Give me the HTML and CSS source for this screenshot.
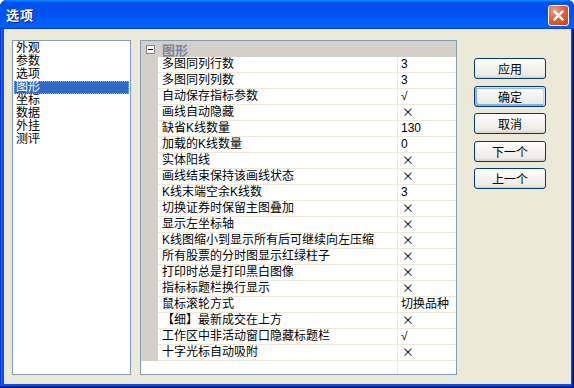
FILE: index.html
```html
<!DOCTYPE html>
<html lang="zh-CN">
<head>
  <meta charset="UTF-8" />
  <title>选项</title>
  <link rel="stylesheet" href="styles.css">
</head>
<body>
  <div class="window">
    <div class="titlebar">
      <span class="title">选项</span>
      <button class="close" title="关闭">
        <svg width="21" height="21" viewBox="0 0 21 21">
          <path d="M6.5 6.5 L14.5 14.5 M14.5 6.5 L6.5 14.5" stroke="#fff" stroke-width="2.4" stroke-linecap="square" fill="none"/>
        </svg>
      </button>
    </div>

    <div class="client">
      <ul class="pages">
        <li>外观</li>
        <li>参数</li>
        <li>选项</li>
        <li class="selected">图形</li>
        <li>坐标</li>
        <li>数据</li>
        <li>外挂</li>
        <li>测评</li>
      </ul>

      <div class="props">
        <div class="category"><span class="toggle"></span>图形</div>
        <div class="row"><span class="gutter"></span><span class="name">多图同列行数</span><span class="value">3</span></div>
        <div class="row"><span class="gutter"></span><span class="name">多图同列列数</span><span class="value">3</span></div>
        <div class="row"><span class="gutter"></span><span class="name">自动保存指标参数</span><span class="value">√</span></div>
        <div class="row"><span class="gutter"></span><span class="name">画线自动隐藏</span><span class="value off">×</span></div>
        <div class="row"><span class="gutter"></span><span class="name">缺省K线数量</span><span class="value">130</span></div>
        <div class="row"><span class="gutter"></span><span class="name">加载的K线数量</span><span class="value">0</span></div>
        <div class="row"><span class="gutter"></span><span class="name">实体阳线</span><span class="value off">×</span></div>
        <div class="row"><span class="gutter"></span><span class="name">画线结束保持该画线状态</span><span class="value off">×</span></div>
        <div class="row"><span class="gutter"></span><span class="name">K线末端空余K线数</span><span class="value">3</span></div>
        <div class="row"><span class="gutter"></span><span class="name">切换证券时保留主图叠加</span><span class="value off">×</span></div>
        <div class="row"><span class="gutter"></span><span class="name">显示左坐标轴</span><span class="value off">×</span></div>
        <div class="row"><span class="gutter"></span><span class="name">K线图缩小到显示所有后可继续向左压缩</span><span class="value off">×</span></div>
        <div class="row"><span class="gutter"></span><span class="name">所有股票的分时图显示红绿柱子</span><span class="value off">×</span></div>
        <div class="row"><span class="gutter"></span><span class="name">打印时总是打印黑白图像</span><span class="value off">×</span></div>
        <div class="row"><span class="gutter"></span><span class="name">指标标题栏换行显示</span><span class="value off">×</span></div>
        <div class="row"><span class="gutter"></span><span class="name">鼠标滚轮方式</span><span class="value">切换品种</span></div>
        <div class="row"><span class="gutter"></span><span class="name">【细】最新成交在上方</span><span class="value off">×</span></div>
        <div class="row"><span class="gutter"></span><span class="name">工作区中非活动窗口隐藏标题栏</span><span class="value">√</span></div>
        <div class="row"><span class="gutter"></span><span class="name">十字光标自动吸附</span><span class="value off">×</span></div>
        <div class="filler"><span></span><span class="value"></span></div>
      </div>

      <div class="actions">
        <button>应用</button>
        <button class="default">确定</button>
        <button>取消</button>
        <button>下一个</button>
        <button>上一个</button>
      </div>
    </div>
  </div>
</body>
</html>
```

FILE: styles.css
```css
* {
  box-sizing: border-box;
  margin: 0;
  padding: 0;
}

body {
  font-family: "Liberation Sans", "Noto Sans CJK SC", sans-serif;
  font-size: 12px;
  color: #000;
  background: #fff;
}

.window {
  width: 574px;
  height: 388px;
  display: flex;
  flex-direction: column;
  background: #0855dd;
  border-radius: 7px 7px 0 0;
  box-shadow: inset -1px -1px #00138c, inset 1px 1px #0831d9,
    inset -2px -2px #001ea0, inset 2px 2px #166aee;
  overflow: hidden;
}

.titlebar {
  height: 29px;
  display: flex;
  align-items: center;
  justify-content: space-between;
  padding: 0 5px 0 6px;
  background: linear-gradient(180deg, #0997ff, #0053ee 8%, #0050ee 40%, #0060fc 88%, #0060fc 93%, #005bff 95%, #003dd7 96%, #003dd7);
  border-radius: 7px 7px 0 0;
}

.title {
  color: #fff;
  font-weight: bold;
  font-size: 13px;
  letter-spacing: 1px;
  text-shadow: 1px 1px #0a1b80;
}

.close {
  width: 21px;
  height: 21px;
  margin-top: 2px;
  border: 1px solid #fff;
  border-radius: 3px;
  background: radial-gradient(circle at 30% 25%, #f0a08a, #e0603c 45%, #c8401a);
  display: flex;
  align-items: center;
  justify-content: center;
}

.close svg {
  display: block;
  margin: -1px;
}

.client {
  flex: 1;
  margin: 0 3px 4px 4px;
  background: #ece9d8;
  display: flex;
  align-items: flex-start;
  padding: 11px 0 0 8px;
}

.pages {
  width: 119px;
  height: 335px;
  border: 1px solid #7f9db9;
  background: #fff;
  list-style: none;
  padding: 1px;
}

.pages li {
  height: 13px;
  line-height: 13px;
  padding-left: 2px;
}

.pages li.selected {
  background: #316ac5;
  color: #fff;
  outline: 1px dotted #d9a84e;
  outline-offset: -1px;
}

.props {
  width: 317px;
  height: 335px;
  margin-left: 9px;
  border: 1px solid #7f9db9;
  background: #fff;
  display: flex;
  flex-direction: column;
}

.category {
  height: 16px;
  flex-shrink: 0;
  background: #d4d0c8;
  display: flex;
  align-items: center;
  font-weight: bold;
  font-size: 13px;
  color: #7a869a;
}

.toggle {
  width: 9px;
  height: 9px;
  margin: 0 7px 0 5px;
  border: 1px solid #848284;
  background: linear-gradient(#000, #000) center / 5px 1px no-repeat, #fff;
}

.row {
  height: 16px;
  flex-shrink: 0;
  display: grid;
  grid-template-columns: 17px 239px 59px;
}

.gutter {
  background: #d4d0c8;
}

.name,
.value {
  line-height: 15px;
  border-bottom: 1px solid #ece9d8;
  white-space: nowrap;
}

.name {
  padding-left: 4px;
}

.value {
  padding-left: 3px;
  border-left: 1px solid #ece9d8;
}

.value.off {
  font-family: "Noto Sans CJK SC", sans-serif;
  line-height: 14px;
  padding-left: 4px;
}

.filler {
  flex: 1;
  display: grid;
  grid-template-columns: 256px 59px;
}

.filler .value {
  border-bottom: none;
}

.actions {
  margin-left: 17px;
  padding-top: 18px;
  display: flex;
  flex-direction: column;
  gap: 6.5px;
}

.actions button {
  width: 72px;
  height: 21px;
  border: 1px solid #003c74;
  border-radius: 3px;
  background: linear-gradient(180deg, #fff, #f4f3ee 45%, #ecebe6 85%, #d6d0c5);
  font-family: inherit;
  font-size: 12px;
  color: #000;
}

.actions button.default {
  box-shadow: inset -1px 1px #cee7ff, inset 1px 2px #98b8ea,
    inset -2px 2px #bcd4f6, inset 1px -1px #89ade4, inset 2px -2px #89ade4;
}
```
